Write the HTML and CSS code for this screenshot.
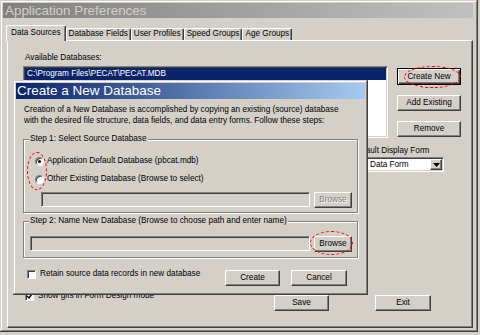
FILE: index.html
```html
<!DOCTYPE html>
<html>
<head>
<meta charset="utf-8">
<title>Application Preferences</title>
<link rel="stylesheet" href="styles.css">
</head>
<body>
<div class="screen">
  <div class="window">
    <div class="titlebar">Application Preferences</div>
    <div class="tabs">
      <div class="tab active">Data Sources</div>
      <div class="tab">Database Fields</div>
      <div class="tab">User Profiles</div>
      <div class="tab">Speed Groups</div>
      <div class="tab">Age Groups</div>
    </div>
    <div class="panel">
      <div class="caption caption-db">Available Databases:</div>
      <div class="db-row">
        <div class="listbox">
          <div class="list-item selected">C:\Program Files\PECAT\PECAT.MDB</div>
        </div>
        <div class="side-buttons">
          <button class="btn default">Create New</button>
          <button class="btn">Add Existing</button>
          <button class="btn">Remove</button>
        </div>
      </div>
      <div class="form-row">
        <div class="display-form">
          <div class="caption">Default Display Form</div>
          <div class="combo">
            <span class="combo-text">Data Form</span>
            <span class="combo-arrow"><svg width="7" height="4" viewBox="0 0 7 4"><path d="M0 0h7L3.5 4z" fill="#000"/></svg></span>
          </div>
        </div>
      </div>
      <div class="spacer"></div>
      <div class="bottom-row">
        <div class="check check-gifs"><span class="box"><svg width="7" height="7" viewBox="0 0 7 7"><path d="M1 3l2 2 3-4" fill="none" stroke="#000" stroke-width="1.4"/></svg></span>Show gifs in Form Design mode</div>
        <button class="btn btn-save">Save</button>
        <button class="btn btn-exit">Exit</button>
      </div>
    </div>
  </div>

  <div class="dialog">
    <div class="dialog-title">Create a New Database</div>
    <div class="dialog-body">
      <p class="intro">Creation of a New Database is accomplished by copying an existing (source) database<br>with the desired file structure, data fields, and data entry forms. Follow these steps:</p>
      <fieldset class="group group-1">
        <legend>Step 1: Select Source Database</legend>
        <div class="radio-row"><span class="radio checked"></span>Application Default Database (pbcat.mdb)</div>
        <div class="radio-row"><span class="radio"></span>Other Existing Database (Browse to select)</div>
        <div class="field-row indent">
          <div class="textfield"></div>
          <button class="btn btn-browse disabled">Browse</button>
        </div>
      </fieldset>
      <fieldset class="group group-2">
        <legend>Step 2: Name New Database (Browse to choose path and enter name)</legend>
        <div class="field-row">
          <div class="textfield"></div>
          <button class="btn btn-browse">Browse</button>
        </div>
      </fieldset>
      <div class="dialog-footer">
        <div class="check check-retain"><span class="box"></span>Retain source data records in new database</div>
        <button class="btn btn-create">Create</button>
        <button class="btn btn-cancel">Cancel</button>
      </div>
    </div>
  </div>

  <div class="mark mark-create"></div>
  <div class="mark mark-radio"></div>
  <div class="mark mark-browse"></div>
</div>
</body>
</html>
```

FILE: styles.css
```css
* { box-sizing: border-box; }
html, body { margin: 0; padding: 0; }
body {
  width: 480px;
  height: 335px;
  overflow: hidden;
  background: #d4d0c8;
  font-family: "Liberation Sans", Arial, sans-serif;
  font-size: 8.2px;
  color: #000;
}
.screen { position: relative; width: 480px; height: 335px; }

/* main window */
.window {
  width: 478px;
  height: 332px;
  display: flex;
  flex-direction: column;
  padding: 3px 5px 4px 3px;
  background: #d4d0c8;
  box-shadow: inset -1px -1px #404040, inset 1px 1px #d4d0c8, inset -2px -2px #808080, inset 2px 2px #fff;
}
.titlebar {
  height: 15px;
  line-height: 15px;
  padding-left: 2px;
  font-size: 13.4px;
  color: #d4d0c8;
  background: linear-gradient(to right, #808080, #c0c0c0);
  white-space: nowrap;
}

/* tabs */
.tabs {
  display: flex;
  align-items: flex-end;
  height: 12px;
  margin-top: 10px;
  padding-left: 3px;
}
.tab {
  height: 12px;
  padding: 0 2px;
  line-height: 10px;
  white-space: nowrap;
  background: #d4d0c8;
  border: 1px solid;
  border-color: #fff #404040 transparent #fff;
  border-bottom: 0;
  border-radius: 2px 2px 0 0;
  box-shadow: inset -1px 0 #808080;
}
.tab.active {
  position: relative;
  z-index: 1;
  height: 16px;
  margin-bottom: -1px;
  padding: 2px 4px 0;
}

/* tab panel */
.panel {
  flex: 1;
  display: flex;
  flex-direction: column;
  margin-left: 4px;
  padding: 12px 11px 16px 15px;
  border: 1px solid;
  border-color: #fff #404040 #404040 #fff;
  box-shadow: inset -1px -1px #808080;
}
.caption { line-height: 10px; height: 10px; white-space: nowrap; }
.caption-db { margin-left: 2px; }

.db-row {
  display: grid;
  grid-template-columns: 365px 64px;
  column-gap: 9px;
  margin-top: 3px;
}
.listbox {
  height: 72px;
  background: #fff;
  border: 1px solid;
  border-color: #808080 #fff #fff #808080;
  box-shadow: inset 1px 1px #404040, inset -1px -1px #d4d0c8;
  padding: 1px;
}
.list-item {
  height: 12px;
  line-height: 12px;
  padding-left: 2px;
  white-space: nowrap;
}
.list-item.selected { background: #0a246a; color: #fff; }

.side-buttons {
  display: flex;
  flex-direction: column;
  gap: 10px;
  margin-top: 2px;
}

/* buttons */
.btn {
  appearance: none;
  margin: 0;
  padding: 0;
  height: 16px;
  font: inherit;
  line-height: 14px;
  color: #000;
  text-align: center;
  white-space: nowrap;
  background: #d4d0c8;
  border: 1px solid;
  border-color: #fff #404040 #404040 #fff;
  box-shadow: inset -1px -1px #808080;
}
.btn.default {
  height: 17px;
  border-color: #000;
  box-shadow: inset 1px 1px #fff, inset -1px -1px #404040, inset -2px -2px #808080;
}
.btn.disabled { color: #808080; text-shadow: 1px 1px #fff; }

/* default display form */
.form-row {
  display: flex;
  justify-content: flex-end;
  margin-top: 8px;
  padding-right: 17px;
}
.display-form {
  width: 91px;
  display: flex;
  flex-direction: column;
  align-items: flex-end;
}
.display-form .caption { align-self: flex-start; }
.combo {
  width: 78px;
  height: 15px;
  margin-top: 1px;
  display: flex;
  align-items: stretch;
  background: #fff;
  border: 1px solid;
  border-color: #808080 #fff #fff #808080;
  box-shadow: inset 1px 1px #404040, inset -1px -1px #d4d0c8;
  padding: 1px;
}
.combo-text { flex: 1; line-height: 11px; padding-left: 2px; }
.combo-arrow {
  width: 12px;
  display: flex;
  align-items: center;
  justify-content: center;
  background: #d4d0c8;
  border: 1px solid;
  border-color: #fff #404040 #404040 #fff;
  box-shadow: inset -1px -1px #808080;
}

.spacer { flex: 1; }
.bottom-row { display: flex; align-items: flex-start; }
.bottom-row .check { flex: 1; margin-left: 2px; }
.btn-save { width: 55px; margin-top: 4px; margin-right: 46px; }
.btn-exit { width: 56px; margin-top: 4px; margin-right: 30px; }

/* checkboxes & radios */
.check { display: flex; align-items: center; line-height: 10px; height: 10px; white-space: nowrap; }
.box {
  width: 9px;
  height: 9px;
  margin-right: 4px;
  flex: none;
  display: flex;
  align-items: center;
  justify-content: center;
  background: #fff;
  border: 1px solid;
  border-color: #808080 #fff #fff #808080;
  box-shadow: inset 1px 1px #404040;
}
.radio-row { display: flex; align-items: center; height: 10px; line-height: 10px; margin-left: 6px; white-space: nowrap; }
.radio-row + .radio-row { margin-top: 8px; }
.radio {
  position: relative;
  width: 9px;
  height: 9px;
  margin-right: 3px;
  flex: none;
  border-radius: 50%;
  background: #fff;
  border: 1px solid;
  border-color: #808080 #fff #fff #808080;
  box-shadow: inset 1px 1px #404040;
}
.radio.checked::after {
  content: "";
  position: absolute;
  left: 2px;
  top: 2px;
  width: 3px;
  height: 3px;
  border-radius: 50%;
  background: #000;
}

/* dialog */
.dialog {
  position: absolute;
  left: 13px;
  top: 80px;
  width: 355px;
  height: 215px;
  display: flex;
  flex-direction: column;
  padding: 3px;
  background: #d4d0c8;
  box-shadow: inset -1px -1px #404040, inset 1px 1px #d4d0c8, inset -2px -2px #808080, inset 2px 2px #fff;
}
.dialog-title {
  height: 16px;
  line-height: 16px;
  padding-left: 1px;
  font-size: 13.5px;
  color: #fff;
  background: linear-gradient(to right, #0a246a, #a6caf0);
  white-space: nowrap;
}
.dialog-body { padding: 0 7px; }
.intro { margin: 5px 0 0 1px; line-height: 11px; white-space: nowrap; }

.group {
  margin: 8px 0 0;
  min-width: 0;
  padding: 12px 5px 4px 5px;
  border: 1px solid #808080;
  box-shadow: inset 1px 1px #fff, 1px 1px #fff;
}
.group legend {
  padding: 0 1px;
  line-height: 10px;
  background: #d4d0c8;
  white-space: nowrap;
}
.group-2 { margin-top: 3px; padding: 10px 5px 5px 5px; }

.field-row { display: flex; align-items: flex-start; gap: 4px; margin-left: 1px; }
.field-row.indent { margin-left: 12px; margin-top: 8px; }
.textfield {
  flex: 1;
  height: 15px;
  background: #d4d0c8;
  border: 1px solid;
  border-color: #808080 #fff #fff #808080;
  box-shadow: inset 1px 1px #404040, inset -1px -1px #d4d0c8;
}
.btn-browse { width: 38px; }

.dialog-footer { display: flex; align-items: flex-start; margin-top: 11px; }
.dialog-footer .check { flex: 1; margin-left: 4px; }
.btn-create { width: 55px; margin-top: 1px; margin-right: 11px; }
.btn-cancel { width: 56px; margin-top: 1px; margin-right: 11px; }

/* red annotation ellipses */
.mark {
  position: absolute;
  border: 1px dashed #f00;
  border-radius: 50%;
}
.mark-create { left: 404px; top: 66px; width: 57px; height: 22px; }
.mark-radio { left: 27px; top: 152px; width: 20px; height: 38px; }
.mark-browse { left: 310px; top: 231px; width: 43px; height: 24px; }
```
